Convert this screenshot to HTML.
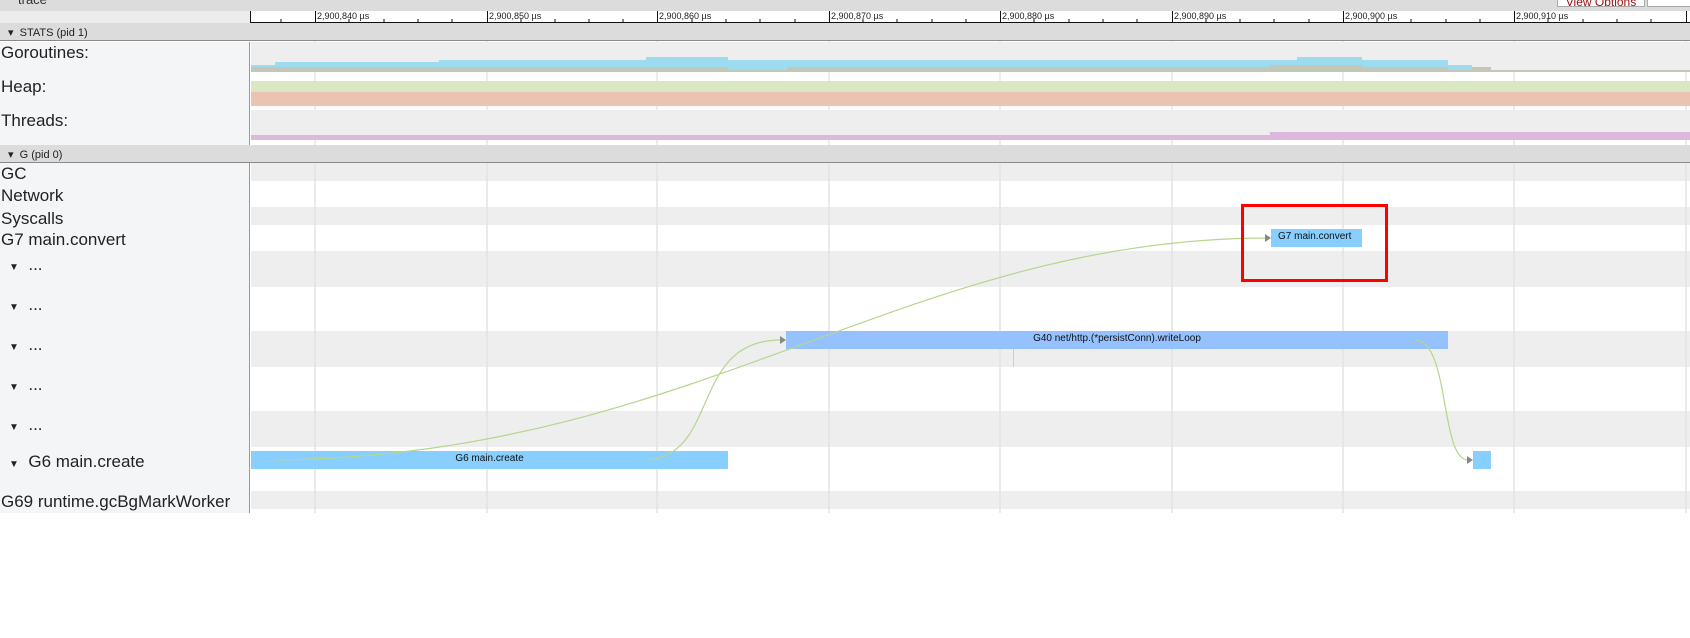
<!DOCTYPE html>
<html><head><meta charset="utf-8"><style>
*{margin:0;padding:0;box-sizing:border-box}
body{width:1690px;height:638px;overflow:hidden;background:#fff;font-family:"Liberation Sans",sans-serif;position:relative}
.a{position:absolute}
.lbl{position:absolute;left:1px;font-size:17px;color:#222;white-space:nowrap;line-height:18px}
.sm{font-size:10px;color:#111;white-space:nowrap;line-height:12px}
</style></head><body>
<div class="a" style="left:0;top:0;width:1690px;height:11px;background:#dcdcdc"></div>
<div class="a" style="left:18px;top:-8px;font-size:13px;color:#333">trace</div>
<div class="a" style="left:1557px;top:-3px;width:88px;height:10px;background:#fff;border:1px solid #aaa;font-size:12px;line-height:8px;color:#a01010;text-align:center;overflow:hidden">View Options</div>
<div class="a" style="left:1647px;top:-3px;width:50px;height:10px;background:#fff;border:1px solid #aaa"></div>
<div class="a" style="left:0;top:11px;width:250px;height:13px;background:#ececec"></div>
<div class="a" style="left:250px;top:11px;width:1440px;height:12px;background:#fff;border-bottom:1px solid #111"></div>
<svg class="a" style="left:0;top:0" width="1690" height="520">
<g stroke="#111" stroke-width="1">
<line x1="250.5" y1="11" x2="250.5" y2="23"/>
</g>
<g stroke="#e0e0e0" stroke-width="1.2">
<line x1="315" y1="23" x2="315" y2="513"/><line x1="487" y1="23" x2="487" y2="513"/><line x1="657" y1="23" x2="657" y2="513"/><line x1="829" y1="23" x2="829" y2="513"/><line x1="1000" y1="23" x2="1000" y2="513"/><line x1="1172" y1="23" x2="1172" y2="513"/><line x1="1343" y1="23" x2="1343" y2="513"/><line x1="1514" y1="23" x2="1514" y2="513"/><line x1="1686" y1="23" x2="1686" y2="513"/>
</g>
</svg>
<div class="a" style="left:0;top:23px;width:1690px;height:18px;background:#dcdcdc;border-bottom:1px solid #8a8a8a"></div>
<div class="a" style="left:8px;top:26px;font-size:11px;color:#222">▾&nbsp; STATS (pid 1)</div>
<div class="a" style="left:0;top:42px;width:250px;height:103px;background:#f4f5f7;border-right:1px solid #999"></div>
<div class="a" style="left:0;top:163px;width:250px;height:350px;background:#f4f5f7;border-right:1px solid #999"></div>
<div class="a" style="left:251px;top:42px;width:1439px;height:30px;background:#eeeeee"></div>
<div class="a" style="left:251px;top:81px;width:1439px;height:11px;background:#d9e7c2"></div>
<div class="a" style="left:251px;top:92px;width:1439px;height:14px;background:#eac4b0"></div>
<div class="a" style="left:251px;top:110px;width:1439px;height:25px;background:#eeeeee"></div>
<div class="a" style="left:251px;top:135px;width:1020px;height:5px;background:#dcb8dc"></div>
<div class="a" style="left:1270px;top:132px;width:420px;height:8px;background:#dcb8dc"></div>
<svg class="a" style="left:0;top:0" width="1690" height="145">
<g fill="#9ddbef">
<rect x="251" y="65" width="24" height="2"/>
<rect x="275" y="62" width="164" height="5"/>
<rect x="439" y="60" width="207" height="7"/>
<rect x="646" y="57" width="82" height="10"/>
<rect x="728" y="60" width="59" height="10"/>
<rect x="787" y="60" width="483" height="7"/>
<rect x="1270" y="60" width="27" height="5"/>
<rect x="1297" y="57" width="65" height="8"/>
<rect x="1362" y="60" width="86" height="7"/>
<rect x="1448" y="65" width="24" height="5"/>
</g>
<g fill="#c2c7b8">
<rect x="251" y="67" width="477" height="5"/>
<rect x="728" y="70" width="59" height="2"/>
<rect x="787" y="67" width="483" height="5"/>
<rect x="1270" y="65" width="92" height="7"/>
<rect x="1362" y="67" width="86" height="5"/>
<rect x="1448" y="70" width="24" height="2"/>
<rect x="1472" y="67" width="19" height="5"/>
<rect x="1491" y="70" width="199" height="2"/>
</g>
</svg>
<div class="lbl" style="top:44px">Goroutines:</div>
<div class="lbl" style="top:78px">Heap:</div>
<div class="lbl" style="top:112px">Threads:</div>
<div class="a" style="left:0;top:145px;width:1690px;height:18px;background:#dcdcdc;border-bottom:1px solid #8a8a8a"></div>
<div class="a" style="left:8px;top:148px;font-size:11px;color:#222">▾&nbsp; G (pid 0)</div>
<div class="a" style="left:251px;top:163px;width:1439px;height:18px;background:#eeeeee"></div>
<div class="a" style="left:251px;top:207px;width:1439px;height:18px;background:#eeeeee"></div>
<div class="a" style="left:251px;top:251px;width:1439px;height:36px;background:#eeeeee"></div>
<div class="a" style="left:251px;top:331px;width:1439px;height:36px;background:#eeeeee"></div>
<div class="a" style="left:251px;top:411px;width:1439px;height:36px;background:#eeeeee"></div>
<div class="a" style="left:251px;top:491px;width:1439px;height:18px;background:#eeeeee"></div>
<svg class="a" style="left:0;top:0" width="1690" height="520">
<g stroke="#e0e0e0" stroke-width="1.2">
<line x1="315" y1="163" x2="315" y2="513"/><line x1="487" y1="163" x2="487" y2="513"/><line x1="657" y1="163" x2="657" y2="513"/><line x1="829" y1="163" x2="829" y2="513"/><line x1="1000" y1="163" x2="1000" y2="513"/><line x1="1172" y1="163" x2="1172" y2="513"/><line x1="1343" y1="163" x2="1343" y2="513"/><line x1="1514" y1="163" x2="1514" y2="513"/><line x1="1686" y1="163" x2="1686" y2="513"/>
</g>
<line x1="1013.5" y1="349" x2="1013.5" y2="367" stroke="#e3cc98" stroke-width="1"/>
</svg>
<div class="lbl" style="top:165px">GC</div>
<div class="lbl" style="top:187px">Network</div>
<div class="lbl" style="top:210px">Syscalls</div>
<div class="lbl" style="top:231px">G7 main.convert</div>
<div class="lbl" style="top:256px;left:9px"><span style="font-size:10px">▼</span>&nbsp; ...</div>
<div class="lbl" style="top:296px;left:9px"><span style="font-size:10px">▼</span>&nbsp; ...</div>
<div class="lbl" style="top:336px;left:9px"><span style="font-size:10px">▼</span>&nbsp; ...</div>
<div class="lbl" style="top:376px;left:9px"><span style="font-size:10px">▼</span>&nbsp; ...</div>
<div class="lbl" style="top:416px;left:9px"><span style="font-size:10px">▼</span>&nbsp; ...</div>
<div class="lbl" style="top:453px;left:9px"><span style="font-size:10px">▼</span>&nbsp; G6 main.create</div>
<div class="lbl" style="top:493px">G69 runtime.gcBgMarkWorker</div>
<div class="a" style="left:251px;top:451px;width:477px;height:18px;background:#88ceff"></div>
<div class="a sm" style="left:251px;top:453px;width:477px;text-align:center">G6 main.create</div>
<div class="a" style="left:786px;top:331px;width:662px;height:18px;background:#96c1ff"></div>
<div class="a sm" style="left:786px;top:333px;width:662px;text-align:center">G40 net/http.(*persistConn).writeLoop</div>
<div class="a" style="left:1271px;top:229px;width:91px;height:18px;background:#88ceff"></div>
<div class="a sm" style="left:1278px;top:231px">G7 main.convert</div>
<div class="a" style="left:1473px;top:451px;width:18px;height:18px;background:#88ceff"></div>
<svg class="a" style="left:0;top:0" width="1690" height="520">
<g fill="none" stroke="#b5d68c" stroke-width="1.2">
<path d="M275,460 C700,455 900,240 1266,238"/>
<path d="M647,460 C720,455 690,340 781,340"/>
<path d="M1415,340 C1450,340 1440,460 1468,460"/>
</g>
<g fill="#888">
<polygon points="1265,234 1271,238 1265,242"/>
<polygon points="780,336 786,340 780,344"/>
<polygon points="1467,456 1473,460 1467,464"/>
</g>
</svg>
<div class="a" style="left:1241px;top:204px;width:147px;height:78px;border:3px solid #ff0000"></div>
<div class="a" style="left:317px;top:11px;font-size:9px;color:#222;line-height:10px">2,900,840 µs</div>
<div class="a" style="left:489px;top:11px;font-size:9px;color:#222;line-height:10px">2,900,850 µs</div>
<div class="a" style="left:659px;top:11px;font-size:9px;color:#222;line-height:10px">2,900,860 µs</div>
<div class="a" style="left:831px;top:11px;font-size:9px;color:#222;line-height:10px">2,900,870 µs</div>
<div class="a" style="left:1002px;top:11px;font-size:9px;color:#222;line-height:10px">2,900,880 µs</div>
<div class="a" style="left:1174px;top:11px;font-size:9px;color:#222;line-height:10px">2,900,890 µs</div>
<div class="a" style="left:1345px;top:11px;font-size:9px;color:#222;line-height:10px">2,900,900 µs</div>
<div class="a" style="left:1516px;top:11px;font-size:9px;color:#222;line-height:10px">2,900,910 µs</div>
<svg class="a" style="left:0;top:0" width="1690" height="24">
<g stroke="#111" stroke-width="1">
<line x1="315.5" y1="11" x2="315.5" y2="23"/><line x1="487.5" y1="11" x2="487.5" y2="23"/><line x1="657.5" y1="11" x2="657.5" y2="23"/><line x1="829.5" y1="11" x2="829.5" y2="23"/><line x1="1000.5" y1="11" x2="1000.5" y2="23"/><line x1="1172.5" y1="11" x2="1172.5" y2="23"/><line x1="1343.5" y1="11" x2="1343.5" y2="23"/><line x1="1514.5" y1="11" x2="1514.5" y2="23"/><line x1="1686.5" y1="11" x2="1686.5" y2="23"/>
<line x1="281" y1="19" x2="281" y2="23"/>
<line x1="349" y1="19" x2="349" y2="23"/><line x1="384" y1="19" x2="384" y2="23"/><line x1="418" y1="19" x2="418" y2="23"/><line x1="452" y1="19" x2="452" y2="23"/>
<line x1="521" y1="19" x2="521" y2="23"/><line x1="555" y1="19" x2="555" y2="23"/><line x1="589" y1="19" x2="589" y2="23"/><line x1="623" y1="19" x2="623" y2="23"/>
<line x1="692" y1="19" x2="692" y2="23"/><line x1="726" y1="19" x2="726" y2="23"/><line x1="760" y1="19" x2="760" y2="23"/><line x1="795" y1="19" x2="795" y2="23"/>
<line x1="863" y1="19" x2="863" y2="23"/><line x1="897" y1="19" x2="897" y2="23"/><line x1="932" y1="19" x2="932" y2="23"/><line x1="966" y1="19" x2="966" y2="23"/>
<line x1="1034" y1="19" x2="1034" y2="23"/><line x1="1069" y1="19" x2="1069" y2="23"/><line x1="1103" y1="19" x2="1103" y2="23"/><line x1="1137" y1="19" x2="1137" y2="23"/>
<line x1="1206" y1="19" x2="1206" y2="23"/><line x1="1240" y1="19" x2="1240" y2="23"/><line x1="1274" y1="19" x2="1274" y2="23"/><line x1="1309" y1="19" x2="1309" y2="23"/>
<line x1="1377" y1="19" x2="1377" y2="23"/><line x1="1411" y1="19" x2="1411" y2="23"/><line x1="1446" y1="19" x2="1446" y2="23"/><line x1="1480" y1="19" x2="1480" y2="23"/>
<line x1="1548" y1="19" x2="1548" y2="23"/><line x1="1583" y1="19" x2="1583" y2="23"/><line x1="1617" y1="19" x2="1617" y2="23"/><line x1="1651" y1="19" x2="1651" y2="23"/>
</g>
</svg>
</body></html>
